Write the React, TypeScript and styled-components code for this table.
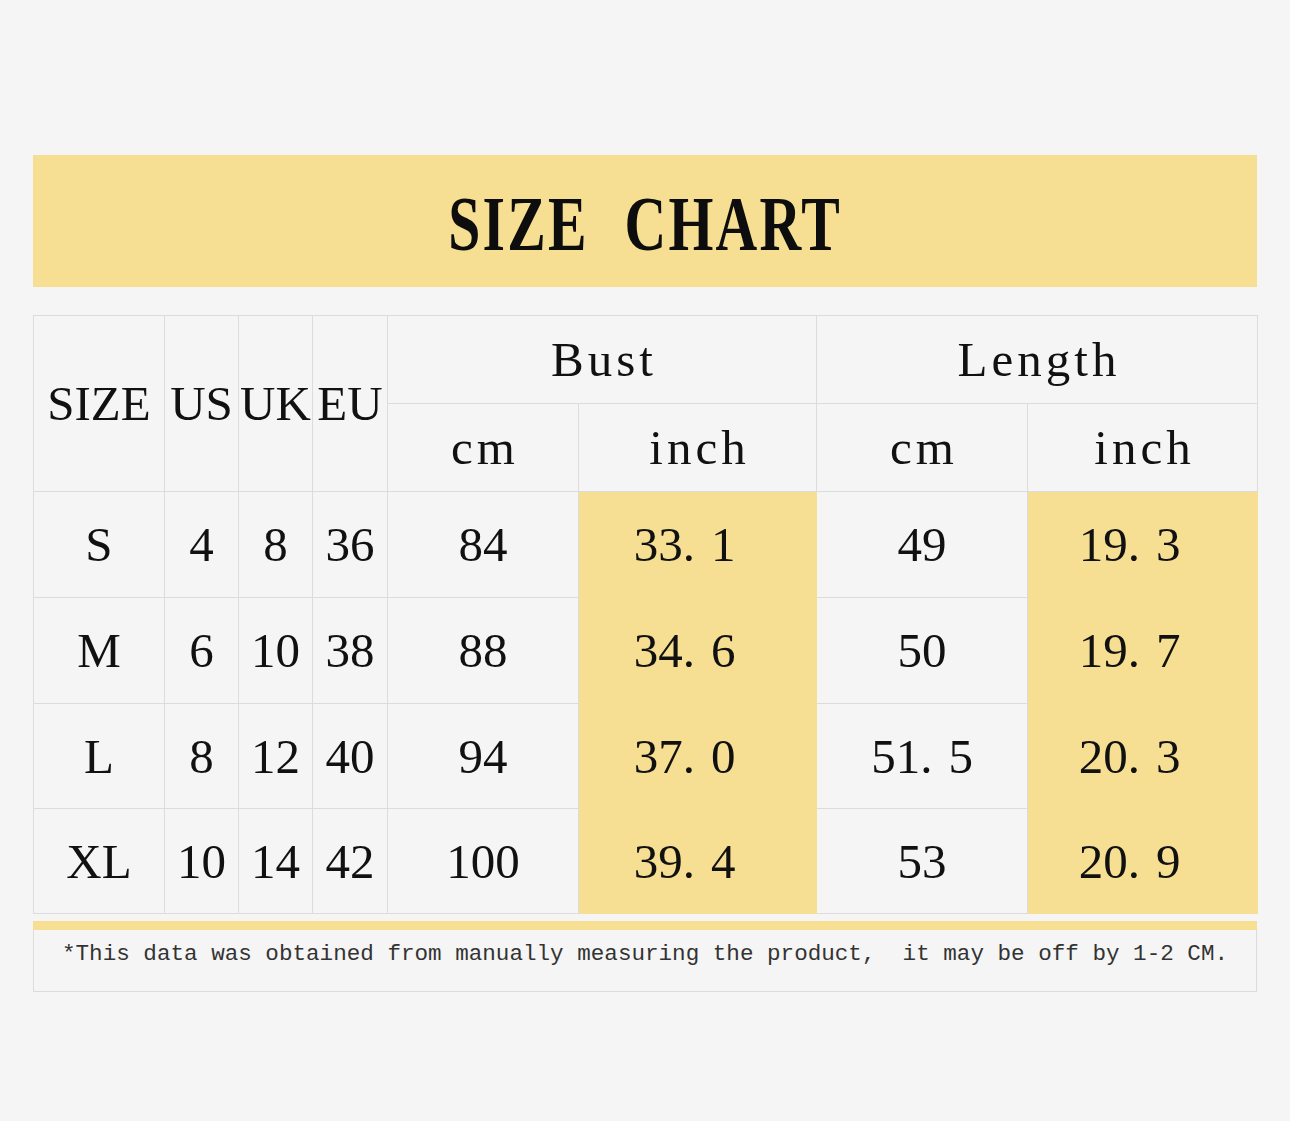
import React from "react";
import styled, { createGlobalStyle } from "styled-components";

const GlobalStyle = createGlobalStyle`
  html, body {
    margin: 0;
    padding: 0;
    background: #f5f5f5;
  }
  body {
    font-family: "Liberation Serif", "Times New Roman", serif;
    color: #111;
  }
`;

const YELLOW = "#f6df93";
const LINE = "#dcdcdc";

const Page = styled.div`
  padding: 155px 33px 130px;
  display: flex;
  flex-direction: column;
`;

const Banner = styled.div`
  height: 132px;
  background: ${YELLOW};
  display: flex;
  align-items: center;
  justify-content: center;
`;

const Title = styled.h1`
  margin: 0;
  font-family: "Liberation Serif", serif;
  font-weight: 700;
  font-size: 78px;
  line-height: 1;
  color: #0d0d0d;
  letter-spacing: 3px;
  word-spacing: 26px;
  transform: scaleX(0.74);
  white-space: nowrap;
  padding-top: 6px;
`;

const Table = styled.table`
  margin-top: 28px;
  width: 100%;
  table-layout: fixed;
  border-collapse: separate;
  border-spacing: 0;
  border-top: 1px solid ${LINE};
  border-left: 1px solid ${LINE};
`;

const Row = styled.tr<{ $h: number }>`
  height: ${(p) => p.$h}px;
`;

const Cell = styled.td<{ $hl?: boolean; $head?: boolean }>`
  padding: 0;
  text-align: center;
  vertical-align: middle;
  font-size: 49px;
  line-height: 1;
  color: #111;
  white-space: nowrap;
  border-right: 1px solid ${(p) => (p.$hl ? YELLOW : LINE)};
  border-bottom: 1px solid ${(p) => (p.$hl ? YELLOW : LINE)};
  background: ${(p) => (p.$hl ? YELLOW : "transparent")};
  padding-right: ${(p) => (p.$hl ? "26px" : "0")};
  letter-spacing: ${(p) => (p.$head ? "4px" : "0")};
  text-indent: ${(p) => (p.$head ? "4px" : "0")};
`;

const HeadCell = styled(Cell).attrs({ as: "th" })`
  font-weight: 400;
`;

const Dot = styled.span`
  padding-right: 16px;
`;

const Bar = styled.div`
  margin-top: 7px;
  height: 9px;
  background: ${YELLOW};
`;

const Footer = styled.div`
  height: 61px;
  border: 1px solid ${LINE};
  border-top: none;
  display: flex;
  align-items: center;
  justify-content: center;
`;

const Note = styled.p`
  margin: 0 0 14px;
  font-family: "Liberation Mono", "Courier New", monospace;
  font-size: 22.6px;
  color: #333;
  white-space: pre;
`;

const Num: React.FC<{ v: string }> = ({ v }) => {
  const i = v.indexOf(".");
  if (i < 0) return <>{v}</>;
  return (
    <>
      {v.slice(0, i)}
      <Dot>.</Dot>
      {v.slice(i + 1)}
    </>
  );
};

const rows = [
  { size: "S", us: "4", uk: "8", eu: "36", bc: "84", bi: "33.1", lc: "49", li: "19.3", h: 106 },
  { size: "M", us: "6", uk: "10", eu: "38", bc: "88", bi: "34.6", lc: "50", li: "19.7", h: 106 },
  { size: "L", us: "8", uk: "12", eu: "40", bc: "94", bi: "37.0", lc: "51.5", li: "20.3", h: 105 },
  { size: "XL", us: "10", uk: "14", eu: "42", bc: "100", bi: "39.4", lc: "53", li: "20.9", h: 105 },
];

const widths = [131, 74, 74, 75, 191, 238, 211, 230];

export default function App() {
  return (
    <>
      <GlobalStyle />
      <Page>
        <Banner>
          <Title>SIZE CHART</Title>
        </Banner>
        <Table>
          <colgroup>
            {widths.map((w, i) => (
              <col key={i} style={{ width: w }} />
            ))}
          </colgroup>
          <thead>
            <Row $h={88}>
              <HeadCell rowSpan={2}>SIZE</HeadCell>
              <HeadCell rowSpan={2}>US</HeadCell>
              <HeadCell rowSpan={2}>UK</HeadCell>
              <HeadCell rowSpan={2}>EU</HeadCell>
              <HeadCell colSpan={2} $head>
                Bust
              </HeadCell>
              <HeadCell colSpan={2} $head>
                Length
              </HeadCell>
            </Row>
            <Row $h={88}>
              <HeadCell $head>cm</HeadCell>
              <HeadCell $head>inch</HeadCell>
              <HeadCell $head>cm</HeadCell>
              <HeadCell $head>inch</HeadCell>
            </Row>
          </thead>
          <tbody>
            {rows.map((r) => (
              <Row $h={r.h} key={r.size}>
                <Cell>{r.size}</Cell>
                <Cell>{r.us}</Cell>
                <Cell>{r.uk}</Cell>
                <Cell>{r.eu}</Cell>
                <Cell>
                  <Num v={r.bc} />
                </Cell>
                <Cell $hl>
                  <Num v={r.bi} />
                </Cell>
                <Cell>
                  <Num v={r.lc} />
                </Cell>
                <Cell $hl>
                  <Num v={r.li} />
                </Cell>
              </Row>
            ))}
          </tbody>
        </Table>
        <Bar />
        <Footer>
          <Note>*This data was obtained from manually measuring the product,  it may be off by 1-2 CM.</Note>
        </Footer>
      </Page>
    </>
  );
}
